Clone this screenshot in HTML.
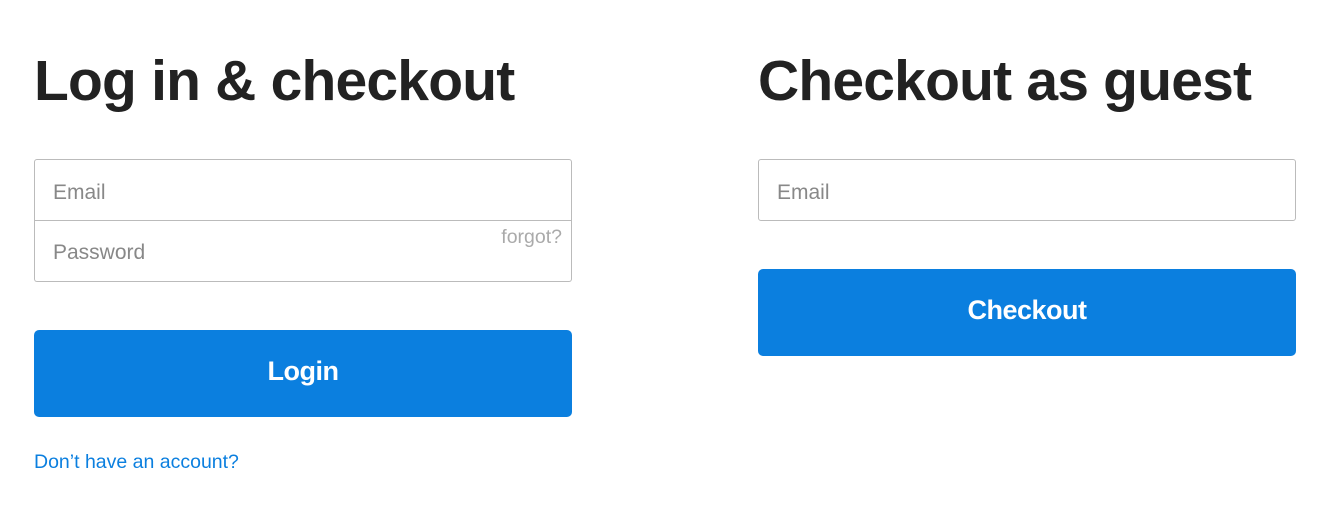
<!DOCTYPE html>
<html><head><meta charset="utf-8"><style>
*{margin:0;padding:0;box-sizing:border-box}
body{width:1333px;height:509px;background:#fff;font-family:"Liberation Sans",sans-serif;position:relative;overflow:hidden}
.h{position:absolute;top:48px;font-weight:bold;font-size:57px;color:#222;letter-spacing:-0.8px;white-space:nowrap}
.in{position:absolute;width:538px;height:62px;border:1px solid #bbb;font-size:21px;color:#888;padding-left:18px;line-height:66px}
.btn{position:absolute;width:538px;height:87px;background:#0b7fdf;border-radius:5px;color:#fff;font-weight:bold;font-size:27px;text-align:center;line-height:83px;letter-spacing:-0.5px}
</style></head><body>
<div class="h" style="left:34px">Log in &amp; checkout</div>
<div class="h" style="left:758px">Checkout as guest</div>
<div class="in" style="left:34px;top:159px;border-radius:3px 3px 0 0">Email</div>
<div class="in" style="left:34px;top:220px;border-radius:0 0 3px 3px;border-top:none;height:62px">Password<span style="position:absolute;right:9px;top:-16px;font-size:19.5px;color:#aaa">forgot?</span></div>
<div class="btn" style="left:34px;top:330px">Login</div>
<div style="position:absolute;left:34px;top:451px;font-size:19.5px;color:#0b7fdf">Don’t have an account?</div>
<div class="in" style="left:758px;top:159px;border-radius:3px">Email</div>
<div class="btn" style="left:758px;top:269px">Checkout</div>
</body></html>
